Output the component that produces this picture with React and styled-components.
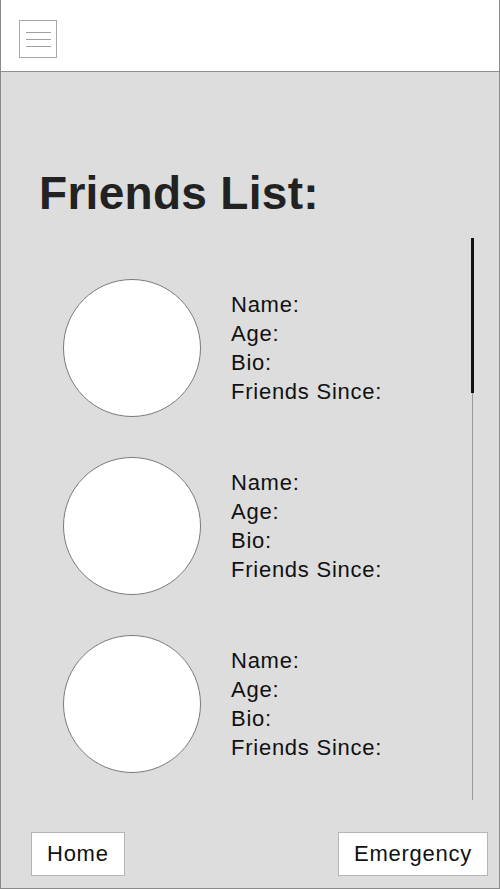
import React from 'react';
import styled, { createGlobalStyle } from 'styled-components';

const GlobalStyle = createGlobalStyle`
  html, body {
    margin: 0;
    padding: 0;
    background: #ffffff;
  }
  * {
    box-sizing: border-box;
  }
`;

const friends = [1, 2, 3];

export default function App() {
  return (
    <>
      <GlobalStyle />
      <Frame>
        <Header>
          <MenuButton aria-label="menu">
            <span />
            <span />
            <span />
          </MenuButton>
        </Header>
        <Main>
          <Title>Friends List:</Title>
          <ListArea>
            <List>
              {friends.map(id => (
                <FriendRow key={id}>
                  <Avatar />
                  <Details>
                    <div>Name:</div>
                    <div>Age:</div>
                    <div>Bio:</div>
                    <div>Friends Since:</div>
                  </Details>
                </FriendRow>
              ))}
            </List>
            <ScrollTrack>
              <ScrollThumb />
            </ScrollTrack>
          </ListArea>
          <Footer>
            <NavButton>Home</NavButton>
            <NavButton>Emergency</NavButton>
          </Footer>
        </Main>
      </Frame>
    </>
  );
}

const Frame = styled.div`
  width: 500px;
  height: 889px;
  display: flex;
  flex-direction: column;
  border-left: 1px solid #8a8a8a;
  border-right: 1px solid #8a8a8a;
  border-bottom: 1px solid #8a8a8a;
  font-family: "Liberation Sans", Arial, sans-serif;
  color: #1a1a1a;
`;

const Header = styled.div`
  height: 72px;
  flex: none;
  background: #ffffff;
  border-bottom: 1px solid #8f8f8f;
  padding: 20px 0 0 18px;
`;

const MenuButton = styled.div`
  width: 38px;
  height: 38px;
  border: 1px solid #a8a8a8;
  display: flex;
  flex-direction: column;
  justify-content: center;
  align-items: center;
  gap: 6px;

  span {
    display: block;
    width: 25px;
    height: 1px;
    background: #a0a0a0;
  }
`;

const Main = styled.div`
  flex: 1;
  display: flex;
  flex-direction: column;
  background: #dddddd;
`;

const Title = styled.h1`
  margin: 98px 0 0 38px;
  font-size: 46px;
  line-height: 46px;
  font-weight: bold;
  letter-spacing: 0.3px;
  color: #222222;
`;

const ListArea = styled.div`
  margin-top: 22px;
  height: 562px;
  display: flex;
`;

const List = styled.div`
  flex: 1;
  display: flex;
  flex-direction: column;
  gap: 40px;
  padding: 41px 0 0 62px;
`;

const FriendRow = styled.div`
  display: flex;
  align-items: center;
  gap: 30px;
`;

const Avatar = styled.div`
  width: 138px;
  height: 138px;
  border-radius: 50%;
  background: #ffffff;
  border: 1px solid #7a7a7a;
`;

const Details = styled.div`
  font-size: 22px;
  line-height: 29px;
  letter-spacing: 0.75px;
  color: #111111;
`;

const ScrollTrack = styled.div`
  width: 3px;
  margin-right: 25px;
  display: flex;
  justify-content: center;
  background: linear-gradient(to right, transparent 1px, #9a9a9a 1px, #9a9a9a 2px, transparent 2px);
`;

const ScrollThumb = styled.div`
  width: 3px;
  height: 155px;
  background: #111111;
`;

const Footer = styled.div`
  flex: 1;
  display: flex;
  justify-content: space-between;
  align-items: flex-start;
  padding: 32px 11px 0 30px;
`;

const NavButton = styled.div`
  height: 44px;
  padding: 0 15px;
  display: flex;
  align-items: center;
  background: #ffffff;
  border: 1px solid #b5b5b5;
  font-size: 22px;
  letter-spacing: 0.75px;
  color: #111111;
`;
